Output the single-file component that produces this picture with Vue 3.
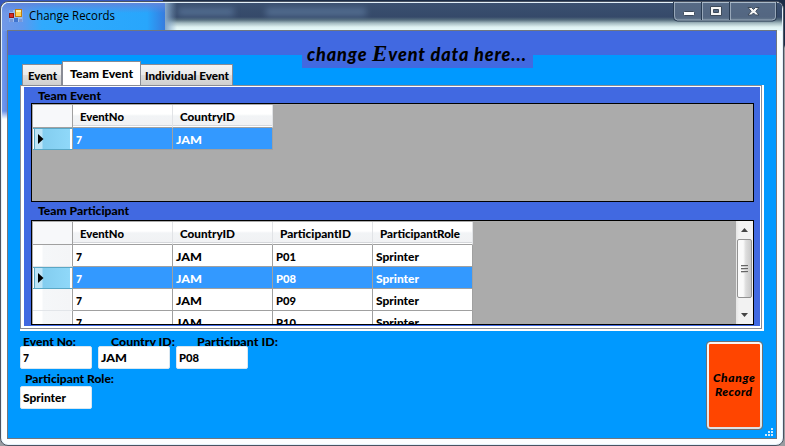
<script setup>
import { h } from 'vue'

// Single line of text set to a fixed measure
const T = (p) =>
  h('svg', { width: p.w + 2, height: 18, class: 'txt' }, [
    h('text', { x: 0, y: 13, textLength: p.w, lengthAdjust: 'spacingAndGlyphs' }, p.t)
  ])
T.props = ['t', 'w']

const tabs = [
  { t: 'Event', w: 29, c: 'first' },
  { t: 'Team Event', w: 63, c: 'active' },
  { t: 'Individual Event', w: 84, c: 'last' }
]
const eventCols = [['EventNo', 44], ['CountryID', 55]]
const partCols = [['EventNo', 44], ['CountryID', 55], ['ParticipantID', 71], ['ParticipantRole', 80]]
const eventRows = [{ sel: true, cells: [['7', 6], ['JAM', 26]] }]
const partRows = ['P01', 'P08', 'P09', 'P10'].map((id) => ({
  sel: id === 'P08',
  cells: [['7', 6], ['JAM', 26], [id, 20], ['Sprinter', 43]]
}))
const grids = [
  { title: 'Team Event', w: 63, c: 'g1', cols: eventCols, rows: eventRows },
  { title: 'Team Participant', w: 91, c: 'g2', cols: partCols, rows: partRows, scroll: true }
]
const fields = [
  { c: 'f1', t: 'Event No:', w: 53, v: '7', vw: 6 },
  { c: 'f2', t: 'Country ID:', w: 64, v: 'JAM', vw: 26 },
  { c: 'f3', t: 'Participant ID:', w: 81, v: 'P08', vw: 20 }
]
</script>

<template>
  <div class="desktop">
    <div class="window">
      <div class="glass"><i class="cyan"></i><i class="dark"></i><i class="ghost a"></i><i class="ghost b"></i></div>
      <header class="titlebar">
        <svg class="appicon" width="14" height="14" viewBox="0 0 14 14">
          <rect x=".5" y="1" width="13" height="12" fill="#b8d0f1" opacity=".65" />
          <path d="M1 10h3v3H1zM5 10h3v3H5zM10 10h3v3h-3zM1 1h3v2H1z" fill="#7797d8" />
          <rect x=".5" y="4.5" width="4" height="4" fill="#d92c24" stroke="#8e1510" />
          <rect x="6.5" y=".5" width="6" height="7" fill="#ffd557" stroke="#bf7e10" />
          <path d="M7 1h5v2H7z" fill="#fff0a8" />
          <rect x="5" y="9" width="4" height="4" fill="#3f74cf" />
        </svg>
        <T class="wtitle" t="Change Records" :w="86" />
        <div class="controls">
          <svg width="104" height="20" viewBox="0 0 104 20">
            <path d="M.5 0v15q0 4 4 4h95q4 0 4-4V0" fill="#718399" fill-opacity=".5" stroke="#293b52" />
            <path d="M1.5 0v14q0 4 3 4h94q4 0 4-3V0M29.500 0v18M57.500 0v18" fill="none" stroke="#aebccb" stroke-opacity=".75" />
            <path d="M28.500 0v18M56.500 0v18" stroke="#293b52" />
            <rect x="10.500" y="9.500" width="11" height="4" rx="1" fill="#fff" stroke="#3d4a5a" />
            <path d="M37.500 4.500h11v9h-11zM40.500 7.500v3h5v-3z" fill="#f5f5f5" fill-rule="evenodd" stroke="#3d4a5a" />
            <path d="M75 5.500h3.500l2 2 2-2H86L82.800 9.300 86 13h-3.500l-2-2-2 2H75l3.200-3.700z" fill="#f5f5f5" stroke="#3d4a5a" />
          </svg>
        </div>
      </header>

      <main class="client">
        <div class="band"></div>
        <div class="banner">
          <svg width="225" height="28"><text x="1" y="18" textLength="219">change <tspan class="swash">E</tspan>vent data here...</text></svg>
        </div>
        <nav class="tabs">
          <div v-for="t in tabs" :key="t.t" class="tab" :class="t.c"><T :t="t.t" :w="t.w" /></div>
        </nav>
        <section class="pane">
          <div class="page">
            <template v-for="g in grids" :key="g.c">
              <div class="caption" :class="g.c"><T :t="g.title" :w="g.w" /></div>
              <div class="grid" :class="g.c">
                <div class="table">
                  <div class="row head">
                    <div class="rh"></div>
                    <div v-for="c in g.cols" :key="c[0]" class="cell"><T :t="c[0]" :w="c[1]" /></div>
                  </div>
                  <div v-for="(r, i) in g.rows" :key="i" class="row" :class="{ sel: r.sel }">
                    <div class="rh"><svg v-if="r.sel" width="6" height="10"><path d="M0 0l5.500 5L0 10z" /></svg></div>
                    <div v-for="(c, j) in r.cells" :key="j" class="cell"><T :t="c[0]" :w="c[1]" /></div>
                  </div>
                </div>
                <div v-if="g.scroll" class="scroll">
                  <svg class="arrow" width="7" height="4"><path d="M0 4L3.500 0 7 4z" /></svg>
                  <div class="thumb"><i></i><i></i><i></i></div>
                  <svg class="arrow" width="7" height="4"><path d="M0 0h7L3.500 4z" /></svg>
                </div>
              </div>
            </template>
          </div>
        </section>
        <section class="bottom">
          <div class="form">
            <div class="fields">
              <div v-for="f in fields" :key="f.c" class="field" :class="f.c">
                <div class="label"><T :t="f.t" :w="f.w" /></div>
                <div class="input"><T :t="f.v" :w="f.vw" /></div>
              </div>
            </div>
            <div class="field role">
              <div class="label"><T t="Participant Role:" :w="89" /></div>
              <div class="input"><T t="Sprinter" :w="43" /></div>
            </div>
          </div>
          <div class="button">
            <svg width="51" height="83">
              <text x="4" y="38" textLength="42">Change</text>
              <text x="6" y="52" textLength="37">Record</text>
            </svg>
          </div>
        </section>
        <svg class="grip" width="9" height="9" fill="#d5e9f7">
          <path d="M6 0h2v2H6zM3 3h2v2H3zM6 3h2v2H6zM0 6h2v2H0zM3 6h2v2H3zM6 6h2v2H6z" />
        </svg>
      </main>
    </div>
  </div>
</template>

<style>
body { margin: 0; overflow: hidden; }
</style>

<style scoped>
* { box-sizing: border-box; }
svg { display: block; flex: none; overflow: visible; }
.desktop {
  width: 785px; height: 446px; padding-top: 1px; overflow: hidden;
  background: linear-gradient(90deg, #3557bd 163px, #1b2c47 163px) 0 0 / 100% 22px no-repeat, linear-gradient(#1b2c47 45px, #9a9da2 48px);
  font: 900 11px "Lato", "Liberation Sans", sans-serif; color: #000;
}
.window {
  position: relative; width: 784px; height: 445px; border: 1px solid #4b5361; border-radius: 8px;
  padding: 0 6px; overflow: hidden; background: #fcfeff; box-shadow: inset 0 0 0 1px #e3f1fa;
}
.glass {
  position: absolute; inset: 1px 1px auto 1px; height: 116px; border-radius: 7px 0 0 0; overflow: hidden;
  background: linear-gradient(transparent 108px, #fafeff 116px), linear-gradient(90deg, #7199ed, #5b86e6 6px, transparent 7px), #fafeff;
}
.glass i { position: absolute; }
.cyan { left: 0; top: 0; width: 167px; height: 28px; background: linear-gradient(#5f86dc 0, transparent 10px), linear-gradient(90deg, #7399e7 0, #6098ed 20px, #30aafd 40px, #28a6fc 145px, #3972d8); }
.dark { left: 163px; right: 0; top: 0; height: 28px; background: linear-gradient(90deg, #86a8c9 0, transparent 12px), linear-gradient(#3b5070 0, #354969 14px, #587080 17px, #a2b9bf 20px, #dff2f2 24px, #e7fbff 28px); }
.ghost { height: 8px; background: #6f8fb5; filter: blur(3px); opacity: .5; top: 5px; }
.ghost.a { left: 176px; width: 56px; }
.ghost.b { left: 264px; width: 100px; }
.titlebar { position: relative; height: 28px; display: flex; align-items: flex-start; }
.appicon { margin: 7px 0 0 2px; }
.wtitle { margin: 5px 0 0 6px; font: 12px "Open Sans", sans-serif; }
.controls { margin-left: auto; }
.client {
  position: relative; width: 770px; height: 409px; border: 1px solid #707780; background: #0099ff;
  display: flex; flex-direction: column;
}
.band { height: 24px; background: #4169e1; }
.banner { position: absolute; left: 294px; top: 12px; width: 231px; height: 25px; padding-left: 4px; background: #4169e1; font: italic 900 18px "Lato", sans-serif; }
.swash { font: italic bold 23px "Liberation Serif", serif; }
.tabs { display: flex; align-items: flex-end; height: 30px; padding-left: 14px; }
.tab { height: 21px; border: 1px solid #898c95; border-bottom: 0; background: linear-gradient(#f3f3f3, #ebebeb 48%, #dcdcdc 52%, #cfcfcf); }
.first { width: 40px; padding: 2px 0 0 5px; }
.active { width: 79px; height: 24px; padding: 3px 0 0 7px; background: #fff; }
.last { width: 92px; padding: 2px 0 0 4px; border-left: 0; }
.pane { width: 744px; height: 246px; margin-left: 12px; background: #fff; padding: 0 2px 2px 0; }
.page { height: 244px; border: 1px solid #898c95; padding: 1px 1px 2px 3px; background: #4169e1; background-clip: content-box; display: flex; flex-direction: column; }
.caption { height: 16px; padding-left: 14px; }
.caption.g2 { height: 18px; }
.grid { width: 723px; margin-left: 7px; border: 1px solid #000; background: #ababab; overflow: hidden; display: flex; justify-content: space-between; }
.grid.g1 { height: 99px; }
.grid.g2 { height: 105px; }
.table { padding: 1px 0 0 1px; }
.row { display: flex; height: 22px; }
.row.head { height: 23px; }
.rh { width: 40px; border-right: 1px solid #a0a0a0; border-bottom: 1px solid #e2e5e9; background: linear-gradient(90deg, #fff 9px, #f5f7f9 10px, #f4f5f7 37px, #fff 38px); }
.head .rh { background: #f7f8fa; border-bottom-color: #a0a0a0; }
.sel .rh { display: flex; align-items: center; padding-left: 5px; border-top: 1px solid #5aa7c5; border-bottom-color: #5aa7c5; background: linear-gradient(90deg, #fff 1px, #5aa7c5 1px, #5aa7c5 2px, #bce4f7 2px, #bce4f7 9px, #83cdef 10px, #8fd8f9 37px, #fff 37px); }
.cell { width: 100px; padding: 3px 0 0 3px; border-right: 1px solid #a0a0a0; border-bottom: 1px solid #a0a0a0; background: #fff; }
.head .cell { padding: 3px 0 0 7px; border-right-color: #e1e3e6; background: linear-gradient(#fff 9px, #f2f4f6 11px, #f1f2f4 20px, #d5d7db 20px, #d5d7db 21px, #fff 21px); }
.sel .cell { background: #3399ff; }
.sel .cell .txt { fill: #fff; }
.scroll { width: 17px; display: flex; flex-direction: column; align-items: center; padding: 7px 0 7px; background: linear-gradient(90deg, #e5e5e5, #f2f2f2 3px); }
.arrow { fill: #444; }
.thumb { width: 15px; height: 59px; margin: 7px 0 auto; border: 1px solid #929292; border-radius: 2px; background: linear-gradient(90deg, #fafafa 40%, #ddd 60%, #c9c9c9); display: flex; flex-direction: column; align-items: center; justify-content: center; gap: 1px; }
.thumb i { width: 7px; height: 2px; background: #666; border-bottom: 1px solid #ccc; }
.bottom { display: flex; justify-content: space-between; padding: 3px 13px 0 12px; }
.form { padding-top: 2px; }
.fields { display: flex; gap: 6px; }
.field { width: 72px; }
.label { height: 10px; width: 120px; }
.label .txt { margin-top: -3px; }
.f1 .label { padding-left: 3px; }
.f2 .label { padding-left: 13px; }
.f3 .label { padding-left: 21px; }
.input { position: relative; width: 72px; height: 23px; border: 1px solid #d9e7f1; border-radius: 2px; background: #fff; padding: 2px 0 0 2px; }
.label { display: flex; align-items: flex-start; }
.role { margin-top: 4px; }
.role .label { height: 13px; padding-left: 5px; }
.role .label .txt { margin-top: -3px; }
.button { width: 57px; height: 89px; margin-top: 7px; border: 1px solid #707070; border-radius: 4px; padding: 2px; background: linear-gradient(#ff4500, #ff4500) content-box, linear-gradient(#f7f7f7 48%, #dce0e3) padding-box; font: italic 900 12px "Lato", sans-serif; }
.grip { position: absolute; right: 2px; bottom: 1px; }
</style>
